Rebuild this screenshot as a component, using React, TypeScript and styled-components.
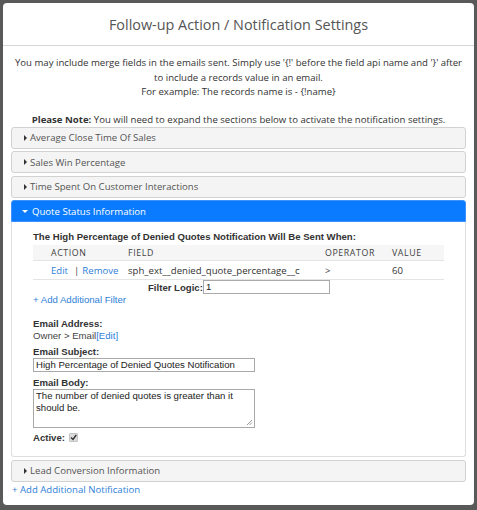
import styled, { createGlobalStyle } from "styled-components";

const Global = createGlobalStyle`
  html, body {
    margin: 0;
    padding: 0;
    background: #595959;
  }
  body {
    font-family: "Open Sans", "Liberation Sans", sans-serif;
  }
`;

const Modal = styled.div`
  margin: 3px;
  width: 471px;
  height: 502px;
  background: #fff;
  border-radius: 4px;
  box-sizing: border-box;
  display: flex;
  flex-direction: column;
`;

const Header = styled.div`
  height: 42px;
  border-bottom: 1px solid #d6d6d6;
  display: flex;
  align-items: center;
  justify-content: center;
  font-size: 14.4px;
  color: #555;
  flex-shrink: 0;
`;

const Body = styled.div`
  padding: 10px 8px 0 8px;
  color: #333;
`;

const Intro = styled.p`
  margin: 0;
  text-align: center;
  line-height: 14.5px;
  font-size: 9.6px;
  color: #333;
`;

const Note = styled.p`
  margin: 13px 0 0 0;
  text-align: center;
  font-size: 9.6px;
  line-height: 14px;
  color: #333;
`;

const Accordion = styled.div`
  display: flex;
  flex-direction: column;
  gap: 2.5px;
`;

const PanelHead = styled.div<{ $open?: boolean }>`
  height: 22px;
  box-sizing: border-box;
  display: flex;
  align-items: center;
  gap: ${(p) => (p.$open ? "4px" : "3px")};
  padding-left: ${(p) => (p.$open ? "10px" : "12px")};
  border: 1px solid ${(p) => (p.$open ? "#3d92ff" : "#d2d2d2")};
  border-radius: ${(p) => (p.$open ? "3px 3px 0 0" : "3px")};
  background: ${(p) => (p.$open ? "#0a7bff" : "#f4f4f4")};
  color: ${(p) => (p.$open ? "#fff" : "#555")};
  font-size: 9.6px;
`;

const Caret = styled.span<{ $open?: boolean }>`
  display: inline-block;
  width: 0;
  height: 0;
  ${(p) =>
    p.$open
      ? `border-left: 3px solid transparent;
         border-right: 3px solid transparent;
         border-top: 3px solid #fff;`
      : `border-top: 3px solid transparent;
         border-bottom: 3px solid transparent;
         border-left: 3px solid #333;`}
`;

const PanelBody = styled.div`
  margin-top: -2.5px;
  border: 1px solid #dedede;
  border-top: none;
  border-radius: 0 0 3px 3px;
  padding: 9px 21px 13px 21px;
  font-family: "Liberation Sans", Arial, sans-serif;
  font-size: 9.6px;
  color: #333;
`;

const Bold = styled.div`
  font-weight: bold;
  font-size: 9.6px;
  line-height: 11px;
  color: #333;
`;

const Table = styled.div`
  margin-top: 3px;
  width: 411px;
  font-family: "Open Sans", sans-serif;
`;

const Row = styled.div<{ $head?: boolean }>`
  display: grid;
  grid-template-columns: 77px 197px 67px 1fr;
  align-items: center;
  height: ${(p) => (p.$head ? "15px" : "18px")};
  padding-left: 18px;
  background: ${(p) => (p.$head ? "#f6f6f6" : "#fff")};
  border-bottom: 1px solid #e4e4e4;
  color: ${(p) => (p.$head ? "#3e3e3e" : "#333")};
  letter-spacing: ${(p) => (p.$head ? "0.6px" : "0")};
  font-size: ${(p) => (p.$head ? "8.8px" : "9.6px")};
`;

const Link = styled.span`
  color: #2f7fd8;
`;

const Sep = styled.span`
  color: #444;
  margin: 0 3px 0 6px;
`;

const FilterRow = styled.div`
  display: flex;
  align-items: center;
  padding-left: 115px;
  height: 14px;
`;

const Input = styled.div<{ $w: number; $h: number }>`
  width: ${(p) => p.$w}px;
  height: ${(p) => p.$h}px;
  box-sizing: border-box;
  border: 1px solid #a9a9a9;
  background: #fff;
  padding: 0 2px;
  font-family: "Liberation Sans", Arial, sans-serif;
  font-size: 9.6px;
  line-height: 12.3px;
  color: #222;
  position: relative;
`;

const Grip = styled.svg`
  position: absolute;
  right: 1px;
  bottom: 1px;
`;

const AddLink = styled.div`
  color: #2f7fd8;
  line-height: 11px;
`;

const Field = styled.div<{ $mt: number }>`
  margin-top: ${(p) => p.$mt}px;
  display: flex;
  flex-direction: column;
  gap: 1px;
`;

const Plain = styled.div`
  line-height: 11px;
  color: #444;
`;

const ActiveRow = styled.div`
  margin-top: 4px;
  display: flex;
  align-items: center;
  gap: 4px;
  height: 11px;
`;

const Check = styled.span`
  width: 9px;
  height: 9px;
  box-sizing: border-box;
  background: #dcdcdc;
  border: 1px solid #c4c4c4;
  border-radius: 1px;
  display: inline-flex;
  align-items: center;
  justify-content: center;
  margin-top: -1px;
`;

const Footer = styled.div`
  margin-top: 2px;
  padding-left: 1px;
  font-size: 9.6px;
  line-height: 12px;
  color: #2f7fd8;
`;

const collapsed = [
  "Average Close Time Of Sales",
  "Sales Win Percentage",
  "Time Spent On Customer Interactions",
];

export default function App() {
  return (
    <>
      <Global />
      <Modal>
        <Header>Follow-up Action / Notification Settings</Header>
        <Body>
          <Intro>
            You may include merge fields in the emails sent. Simply use '{"{!"}' before the field api name and '{"}"}' after
            <br />
            to include a records value in an email.
            <br />
            For example: The records name is - {"{!name}"}
          </Intro>
          <Note>
            <b>Please Note:</b> You will need to expand the sections below to activate the notification settings.
          </Note>
          <Accordion>
            {collapsed.map((t) => (
              <PanelHead key={t}>
                <Caret />
                {t}
              </PanelHead>
            ))}
            <PanelHead $open>
              <Caret $open />
              Quote Status Information
            </PanelHead>
            <PanelBody>
              <Bold>The High Percentage of Denied Quotes Notification Will Be Sent When:</Bold>
              <Table>
                <Row $head>
                  <span>ACTION</span>
                  <span>FIELD</span>
                  <span>OPERATOR</span>
                  <span>VALUE</span>
                </Row>
                <Row>
                  <span>
                    <Link>Edit</Link>
                    <Sep>|</Sep>
                    <Link>Remove</Link>
                  </span>
                  <span>sph_ext__denied_quote_percentage__c</span>
                  <span>&gt;</span>
                  <span>60</span>
                </Row>
              </Table>
              <FilterRow>
                <Bold>Filter Logic:</Bold>
                <Input $w={127} $h={14}>1</Input>
              </FilterRow>
              <AddLink>+ Add Additional Filter</AddLink>
              <Field $mt={13}>
                <Bold>Email Address:</Bold>
                <Plain>
                  Owner &gt; Email<Link>[Edit]</Link>
                </Plain>
              </Field>
              <Field $mt={5}>
                <Bold>Email Subject:</Bold>
                <Input $w={222} $h={14}>High Percentage of Denied Quotes Notification</Input>
              </Field>
              <Field $mt={5}>
                <Bold>Email Body:</Bold>
                <Input $w={222} $h={39}>
                  The number of denied quotes is greater than it should be.
                  <Grip width="7" height="7" viewBox="0 0 7 7">
                    <path d="M6 1 L1 6 M6 3.5 L3.5 6" stroke="#999" strokeWidth="1" />
                  </Grip>
                </Input>
              </Field>
              <ActiveRow>
                <Bold>Active:</Bold>
                <Check>
                  <svg width="7" height="7" viewBox="0 0 7 7">
                    <path d="M1 3.5 L3 5.5 L6.2 1" stroke="#333" strokeWidth="1.4" fill="none" />
                  </svg>
                </Check>
              </ActiveRow>
            </PanelBody>
            <PanelHead>
              <Caret />
              Lead Conversion Information
            </PanelHead>
          </Accordion>
          <Footer>+ Add Additional Notification</Footer>
        </Body>
      </Modal>
    </>
  );
}
